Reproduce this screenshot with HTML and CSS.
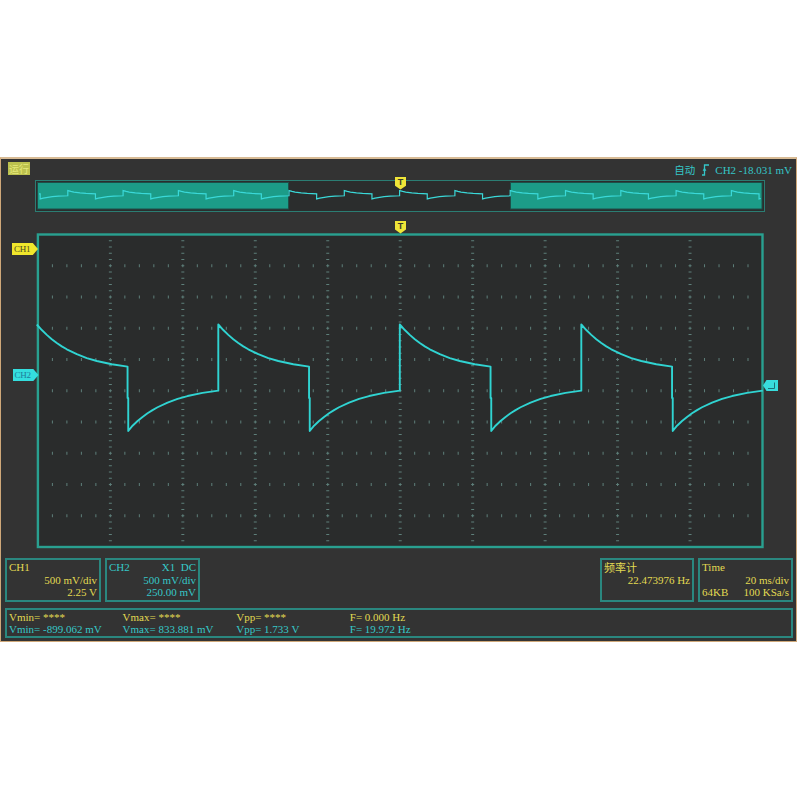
FILE: index.html
```html
<!DOCTYPE html>
<html>
<head>
<meta charset="utf-8">
<title>Scope</title>
<link rel="stylesheet" href="styles.css">
</head>
<body>
<div class="scope">
  <div class="header">
    <span class="run">运行</span>
    <div class="trig">
      <span class="cjk">自动</span>
      <svg class="edge" width="7" height="12" viewBox="0 0 7 12"><path d="M0 11 H2.5 V1 H7" fill="none" stroke="#35c6c8" stroke-width="1.3"/><path d="M0.6 6.8 L2.5 3.6 L4.4 6.8 Z" fill="#35c6c8"/></svg>
      <span>CH2 -18.031 mV</span>
    </div>
  </div>

  <div class="overview">
    <svg width="730" height="32" viewBox="35 180 730 32">
      <rect x="35.5" y="180.5" width="729" height="31" fill="#2b2d2d" stroke="#2b7d73" stroke-width="1"/>
      <rect x="37.5" y="182.5" width="251" height="26.5" fill="#1c9c88" stroke="#1e4e48" stroke-width="1"/>
      <rect x="510.5" y="182.5" width="251.5" height="26.5" fill="#1c9c88" stroke="#1e4e48" stroke-width="1"/>
      <path fill="none" stroke="#3ad8d8" stroke-width="1.2" d="M39 193.9 H40.15
      v5.02 l3.05 -0.78 l3.05 -0.6 l6.09 -0.84 l6.09 -0.51 l9.37 -0.42 v-5.16 l3.05 0.81 l3.05 0.63 l6.09 0.88 l6.09 0.53 l9.37 0.44
      v5.02 l3.05 -0.78 l3.05 -0.6 l6.09 -0.84 l6.09 -0.51 l9.37 -0.42 v-5.16 l3.05 0.81 l3.05 0.63 l6.09 0.88 l6.09 0.53 l9.37 0.44
      v5.02 l3.05 -0.78 l3.05 -0.6 l6.09 -0.84 l6.09 -0.51 l9.37 -0.42 v-5.16 l3.05 0.81 l3.05 0.63 l6.09 0.88 l6.09 0.53 l9.37 0.44
      v5.02 l3.05 -0.78 l3.05 -0.6 l6.09 -0.84 l6.09 -0.51 l9.37 -0.42 v-5.16 l3.05 0.81 l3.05 0.63 l6.09 0.88 l6.09 0.53 l9.37 0.44
      v5.02 l3.05 -0.78 l3.05 -0.6 l6.09 -0.84 l6.09 -0.51 l9.37 -0.42 v-5.16 l3.05 0.81 l3.05 0.63 l6.09 0.88 l6.09 0.53 l9.37 0.44
      v5.02 l3.05 -0.78 l3.05 -0.6 l6.09 -0.84 l6.09 -0.51 l9.37 -0.42 v-5.16 l3.05 0.81 l3.05 0.63 l6.09 0.88 l6.09 0.53 l9.37 0.44
      v5.02 l3.05 -0.78 l3.05 -0.6 l6.09 -0.84 l6.09 -0.51 l9.37 -0.42 v-5.16 l3.05 0.81 l3.05 0.63 l6.09 0.88 l6.09 0.53 l9.37 0.44
      v5.02 l3.05 -0.78 l3.05 -0.6 l6.09 -0.84 l6.09 -0.51 l9.37 -0.42 v-5.16 l3.05 0.81 l3.05 0.63 l6.09 0.88 l6.09 0.53 l9.37 0.44
      v5.02 l3.05 -0.78 l3.05 -0.6 l6.09 -0.84 l6.09 -0.51 l9.37 -0.42 v-5.16 l3.05 0.81 l3.05 0.63 l6.09 0.88 l6.09 0.53 l9.37 0.44
      v5.02 l3.05 -0.78 l3.05 -0.6 l6.09 -0.84 l6.09 -0.51 l9.37 -0.42 v-5.16 l3.05 0.81 l3.05 0.63 l6.09 0.88 l6.09 0.53 l9.37 0.44
      v5.02 l3.05 -0.78 l3.05 -0.6 l6.09 -0.84 l6.09 -0.51 l9.37 -0.42 v-5.16 l3.05 0.81 l3.05 0.63 l6.09 0.88 l6.09 0.53 l9.37 0.44
      v5.02 l3.05 -0.78 l3.05 -0.6 l6.09 -0.84 l6.09 -0.51 l9.37 -0.42 v-5.16 l3.05 0.81 l3.05 0.63 l6.09 0.88 l6.09 0.53 l9.37 0.44
      v5.02 l3.05 -0.78 l3.05 -0.6 l6.09 -0.84 l6.09 -0.51 l9.37 -0.42 v-5.16 l3.05 0.81 l3.05 0.63 l6.09 0.88 l6.09 0.53 l9.37 0.44
      v5.02 l1.8 -0.45"/>
    </svg>
  </div>

  <div class="plot">
    <svg width="730" height="318" viewBox="36 232 730 318">
      <rect x="37.9" y="234.5" width="724.6" height="312.5" fill="#2a2c2c"/>
      <g stroke="#5e7f7a" stroke-width="3" stroke-dasharray="1 5.25">
        <line x1="110.36" y1="234" x2="110.36" y2="547"/>
        <line x1="182.82" y1="234" x2="182.82" y2="547"/>
        <line x1="255.28" y1="234" x2="255.28" y2="547"/>
        <line x1="327.74" y1="234" x2="327.74" y2="547"/>
        <line x1="400.2" y1="234" x2="400.2" y2="547"/>
        <line x1="472.66" y1="234" x2="472.66" y2="547"/>
        <line x1="545.12" y1="234" x2="545.12" y2="547"/>
        <line x1="617.58" y1="234" x2="617.58" y2="547"/>
        <line x1="690.04" y1="234" x2="690.04" y2="547"/>
      </g>
      <g stroke="#5e7f7a" stroke-width="3" stroke-dasharray="1 13.492">
        <line x1="37.4" y1="265.75" x2="763" y2="265.75"/>
        <line x1="37.4" y1="297" x2="763" y2="297"/>
        <line x1="37.4" y1="328.25" x2="763" y2="328.25"/>
        <line x1="37.4" y1="359.5" x2="763" y2="359.5"/>
        <line x1="37.4" y1="390.75" x2="763" y2="390.75"/>
        <line x1="37.4" y1="422" x2="763" y2="422"/>
        <line x1="37.4" y1="453.25" x2="763" y2="453.25"/>
        <line x1="37.4" y1="484.5" x2="763" y2="484.5"/>
        <line x1="37.4" y1="515.75" x2="763" y2="515.75"/>
      </g>
      <rect x="37.9" y="234.5" width="724.6" height="312.5" fill="none" stroke="#29a090" stroke-width="2.4"/>
      <path fill="none" stroke="#30d4d2" stroke-width="1.9" stroke-linejoin="round" d="M36.8 324.5
      l5 5.52 l5 4.88 l5 4.3 l5 3.79 l5 3.35 l5 2.96 l10 4.91 l10 3.83 l10 2.97 l15 3.28 l15.75 2.35 v31.4 h0.7 v32.96 l4.3 -5.29 l5 -4.66 l5 -4.12 l5 -3.64 l5 -3.2 l5 -2.83 l10 -4.7 l10 -3.67 l10 -2.85 l15 -3.14 l15.75 -2.25 v-66.15
      l5 5.52 l5 4.88 l5 4.3 l5 3.79 l5 3.35 l5 2.96 l10 4.91 l10 3.83 l10 2.97 l15 3.28 l15.75 2.35 v31.4 h0.7 v32.96 l4.3 -5.29 l5 -4.66 l5 -4.12 l5 -3.64 l5 -3.2 l5 -2.83 l10 -4.7 l10 -3.67 l10 -2.85 l15 -3.14 l15.75 -2.25 v-66.15
      l5 5.52 l5 4.88 l5 4.3 l5 3.79 l5 3.35 l5 2.96 l10 4.91 l10 3.83 l10 2.97 l15 3.28 l15.75 2.35 v31.4 h0.7 v32.96 l4.3 -5.29 l5 -4.66 l5 -4.12 l5 -3.64 l5 -3.2 l5 -2.83 l10 -4.7 l10 -3.67 l10 -2.85 l15 -3.14 l15.75 -2.25 v-66.15
      l5 5.52 l5 4.88 l5 4.3 l5 3.79 l5 3.35 l5 2.96 l10 4.91 l10 3.83 l10 2.97 l15 3.28 l15.75 2.35 v31.4 h0.7 v32.96 l4.3 -5.29 l5 -4.66 l5 -4.12 l5 -3.64 l5 -3.2 l5 -2.83 l10 -4.7 l10 -3.67 l10 -2.85 l15 -3.14 l15.75 -2.25"/>
    </svg>
  </div>

  <div class="info">
    <div class="box yellow w96">
      <div class="row">CH1</div>
      <div class="row r">500 mV/div</div>
      <div class="row r">2.25 V</div>
    </div>
    <div class="box cyan w95">
      <div class="row"><span>CH2</span><span>X1&nbsp; DC</span></div>
      <div class="row r">500 mV/div</div>
      <div class="row r">250.00 mV</div>
    </div>
    <div class="box yellow w94 push">
      <div class="row"><span class="cjk">频率计</span></div>
      <div class="row r">22.473976 Hz</div>
      <div class="row"></div>
    </div>
    <div class="box yellow w95">
      <div class="row">Time</div>
      <div class="row r">20 ms/div</div>
      <div class="row"><span>64KB</span><span>100 KSa/s</span></div>
    </div>
  </div>

  <div class="meas">
    <span class="yellow">Vmin= ****</span>
    <span class="yellow">Vmax= ****</span>
    <span class="yellow">Vpp= ****</span>
    <span class="yellow">F= 0.000 Hz</span>
    <span class="cyan">Vmin= -899.062 mV</span>
    <span class="cyan">Vmax= 833.881 mV</span>
    <span class="cyan">Vpp= 1.733 V</span>
    <span class="cyan">F= 19.972 Hz</span>
  </div>

  <div class="tmark tm-ov">T</div>
  <div class="tmark tm-main">T</div>
  <div class="chmark ch1m">CH1</div>
  <div class="chmark ch2m">CH2</div>
  <svg class="refmark" width="15" height="11" viewBox="0 0 15 11"><polygon points="0,5.5 3.5,0 15,0 15,11 3.5,11" fill="#38dcdc"/><path d="M11.5 2.5 V8.5 H5" fill="none" stroke="#1c7078" stroke-width="1"/></svg>
</div>
</body>
</html>
```

FILE: styles.css
```css
* { box-sizing: border-box; }
html, body { margin: 0; padding: 0; background: #ffffff; }
body {
  font-family: "Liberation Serif", "Noto Sans CJK SC", serif;
  font-size: 11px;
}
.cjk { font-family: "Noto Sans CJK SC", sans-serif; }

.scope {
  position: relative;
  margin-top: 157px;
  width: 797px;
  height: 485px;
  background: #333333;
  border: 1px solid #cfa879;
  border-top: 2px solid #d8bb95;
  display: flex;
  flex-direction: column;
}

.header {
  height: 21px;
  flex: none;
  display: flex;
  justify-content: space-between;
  align-items: flex-start;
  padding: 3px 4px 0 7px;
}
.run {
  height: 13px;
  line-height: 13px;
  padding: 0 1px;
  background: #bcc14e;
  color: #e6e97c;
  font-family: "Noto Sans CJK SC", sans-serif;
  font-size: 10px;
}
.trig {
  display: flex;
  align-items: center;
  color: #35c6c8;
  line-height: 14px;
  height: 14px;
  margin-top: 0.5px;
}
.trig .cjk { font-size: 10.5px; }
.edge { display: block; margin: 0 6px 0 7px; }

.overview { flex: none; margin-left: 34px; width: 730px; height: 32px; }
.plot { flex: none; margin-left: 35px; margin-top: 20px; width: 730px; height: 318px; }
.overview svg, .plot svg { display: block; }

.info {
  flex: none;
  display: flex;
  gap: 4px;
  height: 44px;
  margin: 8px 3px 0 4px;
}
.box {
  height: 44px;
  border: 2px solid #2a877f;
  padding: 1px 2px;
  line-height: 12.5px;
}
.w96 { width: 96px; }
.w95 { width: 95px; }
.w94 { width: 94px; }
.push { margin-left: auto; }
.row {
  height: 12.5px;
  display: flex;
  justify-content: space-between;
  white-space: nowrap;
}
.row.r { justify-content: flex-end; }
.yellow { color: #e2da52; }
.cyan { color: #36c8c8; }

.meas {
  flex: none;
  margin: 6px 3px 0 4px;
  height: 30px;
  border: 2px solid #2a877f;
  padding: 2.2px 2px 0;
  display: grid;
  grid-template-columns: repeat(4, 113.6px);
  line-height: 11.6px;
  white-space: nowrap;
}

.tmark {
  position: absolute;
  width: 11px;
  height: 13px;
  background: #efe538;
  color: #3a3a2a;
  font-family: "Liberation Sans", sans-serif;
  font-weight: bold;
  font-size: 9px;
  line-height: 10px;
  text-align: center;
  clip-path: polygon(0 0, 100% 0, 100% 70%, 50% 100%, 0 70%);
}
.tm-ov { left: 394px; top: 18px; height: 12.5px; }
.tm-main { left: 394px; top: 61.5px; }

.chmark {
  position: absolute;
  width: 26px;
  height: 12px;
  line-height: 12px;
  padding-left: 2px;
  font-family: "Liberation Serif", serif;
  font-size: 9px;
  letter-spacing: -0.2px;
  clip-path: polygon(0 0, 80% 0, 100% 50%, 80% 100%, 0 100%);
}
.ch1m { left: 11px; top: 84px; background: #f0e62c; color: #4a4a1e; }
.ch2m { left: 11.5px; top: 210px; background: #34dede; color: #1f7d9a; }

.refmark { position: absolute; left: 762px; top: 221px; display: block; }
```
